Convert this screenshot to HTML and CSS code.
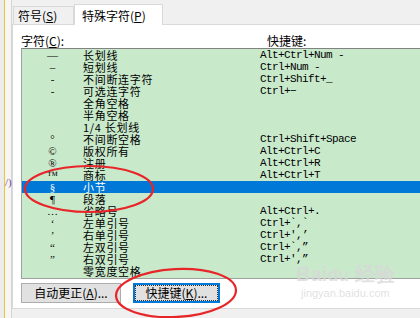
FILE: index.html
```html
<!DOCTYPE html>
<html>
  <head>
    <meta charset="utf-8">
    <title>特殊字符</title>
    <link rel="stylesheet" href="styles.css">
  </head>
  <body>
    <div class="page">
      <div class="side">
        <span class="side-mark">/)</span>
      </div>
      <div class="dialog">
        <div class="tabs">
          <div class="tab">符号(<u>S</u>)</div>
          <div class="tab active">特殊字符(<u>P</u>)</div>
        </div>
        <div class="panel">
          <div class="heads">
            <span class="head-left">字符(<u>C</u>):</span>
            <span class="head-right">快捷键:</span>
          </div>
          <div class="list">
            <div class="row"><span class="sym">—</span><span class="name">长划线</span><span class="key">Alt+Ctrl+Num -</span></div>
            <div class="row"><span class="sym">–</span><span class="name">短划线</span><span class="key">Ctrl+Num -</span></div>
            <div class="row"><span class="sym">-</span><span class="name">不间断连字符</span><span class="key">Ctrl+Shift+_</span></div>
            <div class="row"><span class="sym">-</span><span class="name">可选连字符</span><span class="key">Ctrl+−</span></div>
            <div class="row"><span class="sym"></span><span class="name">全角空格</span><span class="key"></span></div>
            <div class="row"><span class="sym"></span><span class="name">半角空格</span><span class="key"></span></div>
            <div class="row"><span class="sym"></span><span class="name">1/4 长划线</span><span class="key"></span></div>
            <div class="row"><span class="sym">°</span><span class="name">不间断空格</span><span class="key">Ctrl+Shift+Space</span></div>
            <div class="row"><span class="sym">©</span><span class="name">版权所有</span><span class="key">Alt+Ctrl+C</span></div>
            <div class="row"><span class="sym">®</span><span class="name">注册</span><span class="key">Alt+Ctrl+R</span></div>
            <div class="row"><span class="sym">™</span><span class="name">商标</span><span class="key">Alt+Ctrl+T</span></div>
            <div class="row selected"><span class="sym">§</span><span class="name">小节</span><span class="key"></span></div>
            <div class="row"><span class="sym">¶</span><span class="name">段落</span><span class="key"></span></div>
            <div class="row"><span class="sym">…</span><span class="name">省略号</span><span class="key">Alt+Ctrl+.</span></div>
            <div class="row"><span class="sym">‘</span><span class="name">左单引号</span><span class="key">Ctrl+`,`</span></div>
            <div class="row"><span class="sym">’</span><span class="name">右单引号</span><span class="key">Ctrl+',’</span></div>
            <div class="row"><span class="sym">“</span><span class="name">左双引号</span><span class="key">Ctrl+`,”</span></div>
            <div class="row"><span class="sym">”</span><span class="name">右双引号</span><span class="key">Ctrl+',”</span></div>
            <div class="row"><span class="sym"></span><span class="name">零宽度空格</span><span class="key"></span></div>
          </div>
          <div class="buttons">
            <button type="button" class="btn btn-auto">自动更正(<u>A</u>)...</button>
            <button type="button" class="btn btn-key"><span class="focus">快捷键(<u>K</u>)...</span></button>
          </div>
        </div>
      </div>
    </div>

    <div class="watermark">
      <div class="wm-logo">Bai<span class="wm-du">du</span> 经验</div>
      <div class="wm-url">jingyan.baidu.com</div>
    </div>

    <svg class="marks" width="420" height="318" viewBox="0 0 420 318">
      <ellipse cx="89" cy="189" rx="64" ry="23" fill="none" stroke="#e8262a" stroke-width="2.2"/>
      <ellipse cx="176" cy="293" rx="60" ry="24" fill="none" stroke="#e8262a" stroke-width="2.2" transform="rotate(-3 176 293)"/>
    </svg>
  </body>
</html>
```

FILE: styles.css
```css
html, body, div, span, button{
  margin:0px;
  padding:0px;
}
body{
  width:420px;
  height:318px;
  overflow:hidden;
  background-color:#f0f0f0;
  font-family:"Noto Sans CJK SC", "Liberation Sans", sans-serif;
  font-size:12px;
  color:#000;
  position:relative;
}
u{
  text-decoration:underline;
}
.page{
  display:flex;
  width:420px;
  height:318px;
  overflow:hidden;
}
.side{
  width:12px;
  flex:none;
  background:linear-gradient(to right, #ececec 0 4px, #f1c232 4px 5px, #f6f6f6 5px 11px, #d4d4d4 11px 12px);
  position:relative;
  overflow:hidden;
}
.side-mark{
  position:absolute;
  left:5px;
  top:176px;
  color:#6b3fa0;
  font-size:11px;
  font-family:"Liberation Serif", serif;
}
.dialog{
  flex:none;
  width:408px;
  display:flex;
  flex-direction:column;
}
.tabs{
  height:24px;
  display:flex;
  align-items:flex-end;
  padding-left:1px;
}
.tab{
  height:17px;
  width:55px;
  border:1px solid #d9d9d9;
  border-bottom:none;
  background-color:#f0f0f0;
  line-height:17px;
  padding-left:4px;
  box-sizing:content-box;
}
.tab.active{
  height:20px;
  width:80px;
  padding-left:7px;
  background-color:#fff;
  margin-bottom:-1px;
  line-height:22px;
  position:relative;
  z-index:1;
}
.panel{
  height:283px;
  background-color:#fff;
  border:1px solid #d9d9d9;
  border-right:none;
  padding-left:8px;
}
.heads{
  height:23px;
  display:flex;
  align-items:flex-end;
  line-height:15px;
}
.head-left{
  width:246px;
}
.list{
  height:229px;
  border:1px solid #a0a0a0;
  border-top-color:#828282;
  border-right:none;
  background-color:#c9e9cb;
  overflow:hidden;
}
.row{
  display:flex;
  height:12px;
  line-height:12px;
  white-space:nowrap;
}
.row.selected{
  background-color:#0078d7;
  color:#fff;
}
.sym{
  width:61px;
  text-align:center;
  font-family:"Liberation Serif", serif;
  font-size:11px;
}
.name{
  width:177px;
  font-size:11px;
  letter-spacing:0.7px;
}
.key{
  font-family:"Liberation Mono", monospace;
  font-size:11px;
  letter-spacing:-0.6px;
}
.buttons{
  display:flex;
  gap:12px;
  padding-top:4px;
}
.btn{
  height:20px;
  font-family:"Noto Sans CJK SC", sans-serif;
  font-size:12px;
  line-height:16px;
  background-color:#e1e1e1;
  border:1px solid #adadad;
  color:#000;
  box-sizing:border-box;
}
.btn-auto{
  width:100px;
}
.btn-key{
  width:87px;
  border:2px solid #0078d7;
  padding:1px;
}
.focus{
  display:block;
  height:14px;
  line-height:14px;
  outline:1px dotted #333;
}
.watermark{
  position:absolute;
  left:296px;
  top:262px;
  color:rgba(215,215,215,0.75);
  text-align:center;
}
.wm-logo{
  font-family:"Liberation Sans", sans-serif;
  font-weight:bold;
  font-size:20px;
  line-height:24px;
}
.wm-du{
  font-size:18px;
}
.wm-url{
  font-family:"Liberation Sans", sans-serif;
  font-size:11px;
  line-height:12px;
}
.marks{
  position:absolute;
  left:0;
  top:0;
  pointer-events:none;
}
```
